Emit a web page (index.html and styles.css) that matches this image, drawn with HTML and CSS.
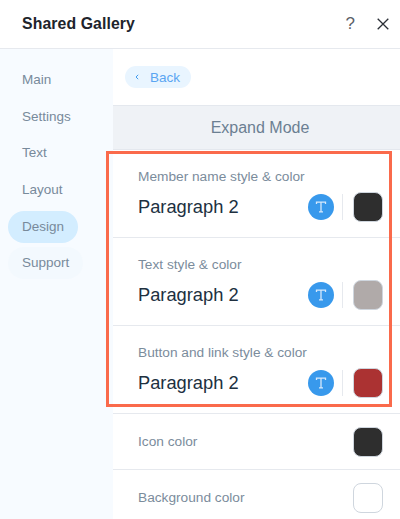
FILE: index.html
```html
<!DOCTYPE html>
<html lang="en">
<head>
<meta charset="utf-8">
<title>Shared Gallery</title>
<link rel="stylesheet" href="styles.css">
</head>
<body>
<div class="panel">
  <header class="header">
    <h1 class="title">Shared Gallery</h1>
    <div class="header-actions">
      <span class="help">?</span>
      <svg class="close" viewBox="0 0 12 12" width="12" height="12"><path d="M0.7 0.7L11.3 11.3M11.3 0.7L0.7 11.3" stroke="#2b2f36" stroke-width="1.3" fill="none"/></svg>
    </div>
  </header>
  <div class="body">
    <nav class="sidebar">
      <a class="nav-item">Main</a>
      <a class="nav-item">Settings</a>
      <a class="nav-item">Text</a>
      <a class="nav-item">Layout</a>
      <a class="nav-item active">Design</a>
      <a class="nav-item faint">Support</a>
    </nav>
    <main class="content">
      <div class="back-row">
        <button class="back"><svg class="chev" viewBox="0 0 4 6" width="4" height="6"><path d="M3.2 0.8L1 3L3.2 5.2" stroke="#3f9bf0" stroke-width="1" fill="none"/></svg><span>Back</span></button>
      </div>
      <div class="section-title">Expand Mode</div>
      <div class="row tall">
        <div class="label">Member name style &amp; color</div>
        <div class="control">
          <span class="para">Paragraph 2</span>
          <span class="t-btn"><svg viewBox="0 0 14 14" width="14" height="14"><path d="M2.5 4V2.2H11.5V4M7 2.2V11.8M5 11.8H9" stroke="#d6e9fb" stroke-width="1.3" fill="none"/></svg></span>
          <span class="divider"></span>
          <span class="swatch dark"></span>
        </div>
      </div>
      <div class="row tall">
        <div class="label">Text style &amp; color</div>
        <div class="control">
          <span class="para">Paragraph 2</span>
          <span class="t-btn"><svg viewBox="0 0 14 14" width="14" height="14"><path d="M2.5 4V2.2H11.5V4M7 2.2V11.8M5 11.8H9" stroke="#d6e9fb" stroke-width="1.3" fill="none"/></svg></span>
          <span class="divider"></span>
          <span class="swatch grey"></span>
        </div>
      </div>
      <div class="row tall">
        <div class="label">Button and link style &amp; color</div>
        <div class="control">
          <span class="para">Paragraph 2</span>
          <span class="t-btn"><svg viewBox="0 0 14 14" width="14" height="14"><path d="M2.5 4V2.2H11.5V4M7 2.2V11.8M5 11.8H9" stroke="#d6e9fb" stroke-width="1.3" fill="none"/></svg></span>
          <span class="divider"></span>
          <span class="swatch red"></span>
        </div>
      </div>
      <div class="row short">
        <div class="label">Icon color</div>
        <span class="swatch dark"></span>
      </div>
      <div class="row short">
        <div class="label">Background color</div>
        <span class="swatch white"></span>
      </div>
    </main>
  </div>
  <div class="highlight"></div>
</div>
</body>
</html>
```

FILE: styles.css
```css
* { box-sizing: border-box; }
html, body { margin: 0; padding: 0; background: #fff; }
body { font-family: "Liberation Sans", Arial, sans-serif; }
.panel { position: relative; width: 400px; height: 519px; overflow: hidden; background: #fff; }
.header { height: 49px; display: flex; align-items: center; justify-content: space-between; padding: 0 11px 1px 22px; border-bottom: 1px solid #e6e9ee; }
.title { margin: 0; font-size: 15.8px; font-weight: 700; color: #20242b; letter-spacing: 0.1px; }
.header-actions { display: flex; align-items: center; gap: 22px; }
.help { font-size: 17px; color: #5c6168; line-height: 20px; }
.close { display: block; }
.body { display: flex; height: 470px; }
.sidebar { width: 113px; background: #f7fbff; display: flex; flex-direction: column; align-items: flex-start; padding: 15px 0 0 8px; gap: 4.7px; flex: none; }
.nav-item { height: 32px; line-height: 32px; padding: 0 14px; border-radius: 16px; font-size: 13.5px; color: #788a9b; }
.nav-item.active { background: #d3edff; }
.nav-item.faint { background: #f3f9fe; }
.content { flex: 1; min-width: 0; }
.back-row { height: 56px; padding: 17px 0 0 12px; }
.back { display: flex; align-items: center; width: 66px; height: 22px; padding: 0 0 0 10px; border: 0; border-radius: 11px; background: #e9f5ff; font: 13.5px "Liberation Sans", Arial, sans-serif; color: #5aa5f2; }
.chev { margin-right: 11px; }
.section-title { height: 45px; line-height: 43px; padding-left: 7px; text-align: center; font-size: 16px; color: #6b7f92; background: #eff2f6; border-top: 1px solid #e4e8ee; border-bottom: 1px solid #e4e8ee; }
.row { border-bottom: 1px solid #e6e9ee; padding: 0 17px 0 25px; }
.row.tall { height: 88px; padding-top: 18px; }
.row.short { height: 56px; display: flex; align-items: center; justify-content: space-between; }
.label { font-size: 13.7px; color: #7b8c9c; line-height: 17px; }
.control { display: flex; align-items: center; height: 30px; margin-top: 7px; }
.para { flex: 1; font-size: 18.3px; color: #20303f; }
.t-btn { width: 26px; height: 26px; border-radius: 50%; background: #3899ec; display: flex; align-items: center; justify-content: center; }
.divider { width: 1px; height: 26px; background: #e6e9ee; margin: 0 10px 0 8px; }
.swatch { width: 30px; height: 30px; border-radius: 8px; border: 1px solid #cfd6de; flex: none; display: block; }
.swatch.dark { background: #2e2e2e; }
.swatch.grey { background: #b0aaa9; }
.swatch.red { background: #ab3232; }
.swatch.white { background: #fff; }
.highlight { position: absolute; left: 106px; top: 151px; width: 286px; height: 256px; border: 3px solid #fa6a4b; pointer-events: none; }
```
